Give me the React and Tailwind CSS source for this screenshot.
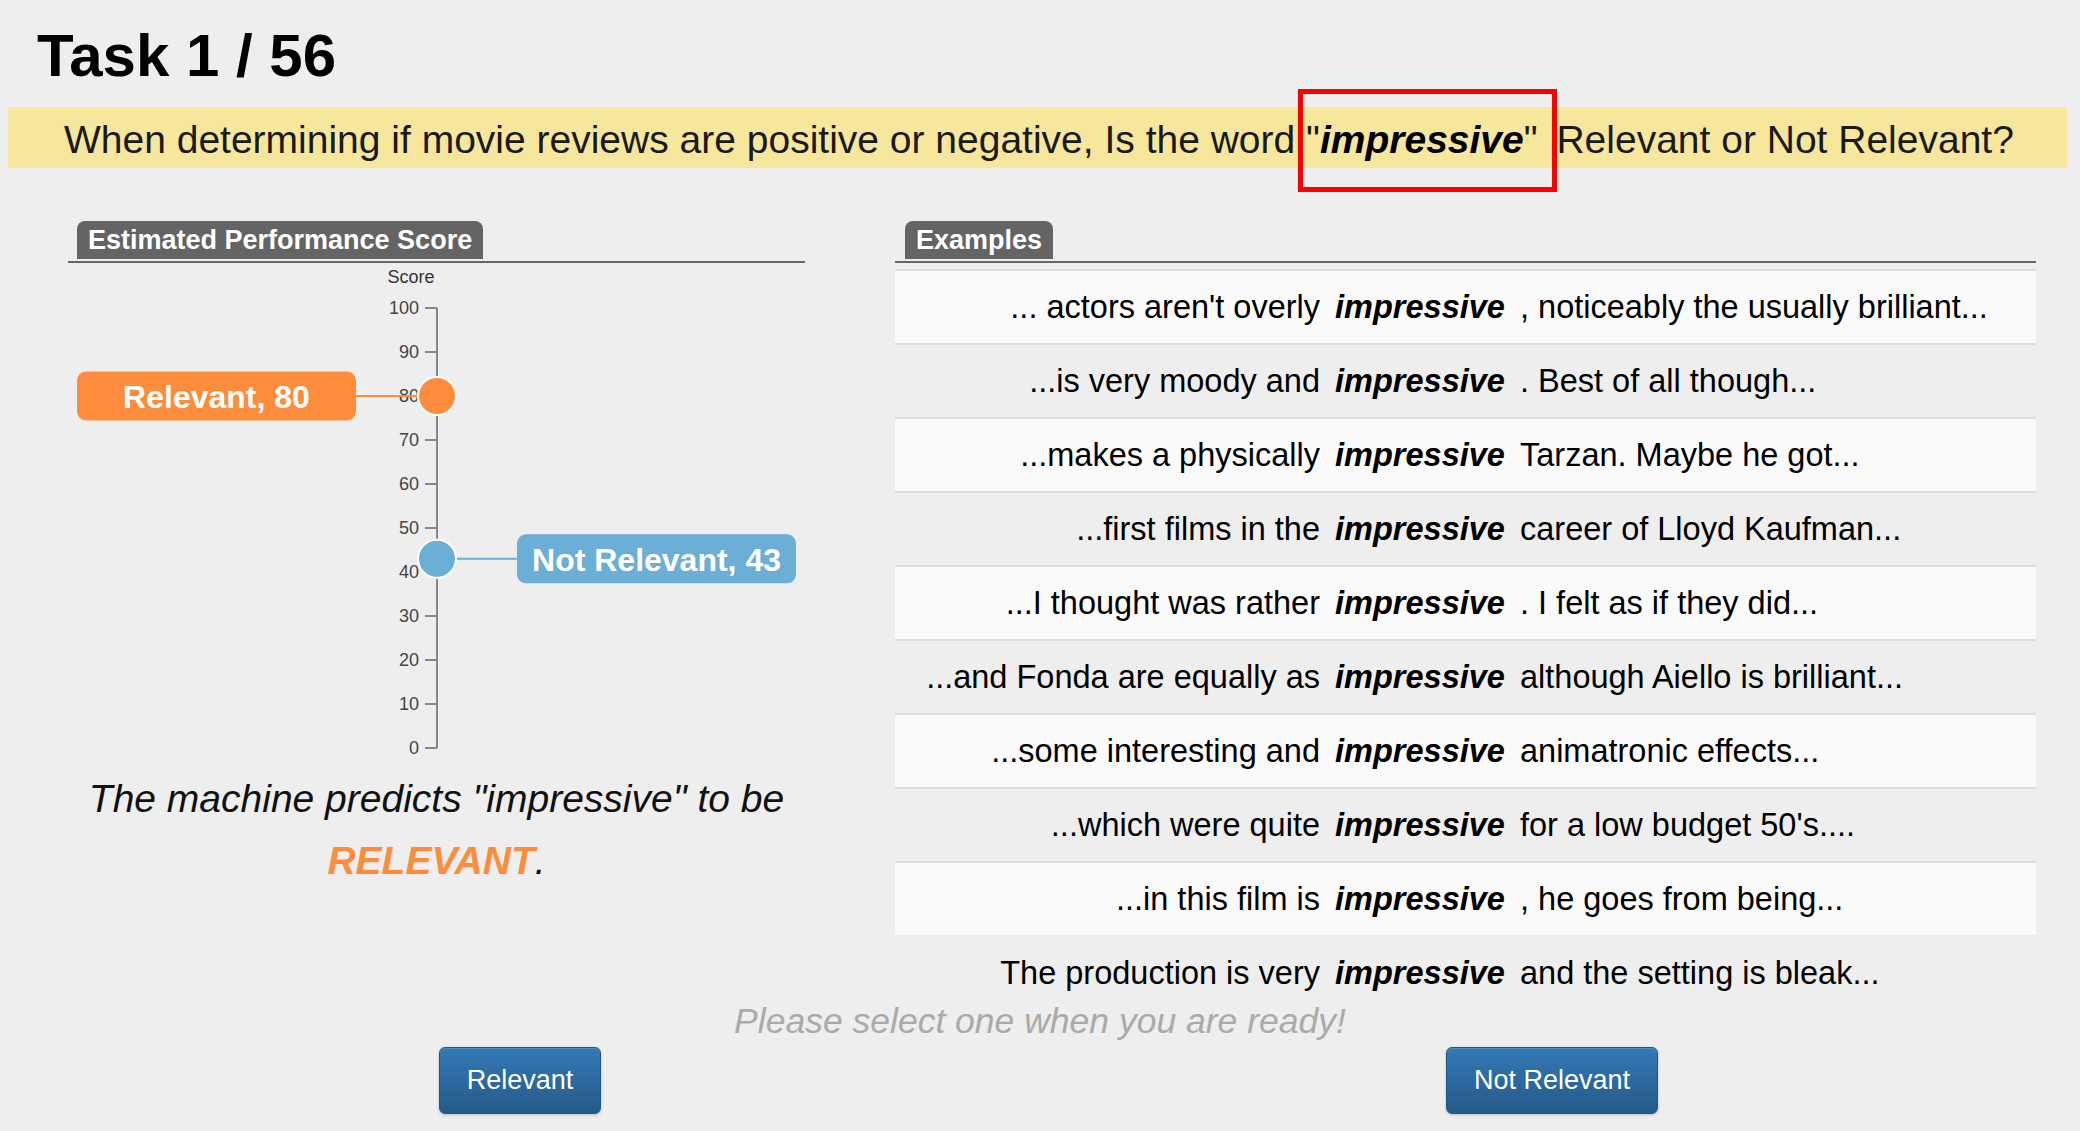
import React from 'react';

const examples = [
  ["... actors aren't overly", ', noticeably the usually brilliant...'],
  ['...is very moody and', '. Best of all though...'],
  ['...makes a physically', 'Tarzan. Maybe he got...'],
  ['...first films in the', 'career of Lloyd Kaufman...'],
  ['...I thought was rather', '. I felt as if they did...'],
  ['...and Fonda are equally as', 'although Aiello is brilliant...'],
  ['...some interesting and', 'animatronic effects...'],
  ['...which were quite', "for a low budget 50's...."],
  ['...in this film is', ', he goes from being...'],
  ['The production is very', 'and the setting is bleak...'],
];

const ticks = [0, 10, 20, 30, 40, 50, 60, 70, 80, 90, 100];
const AXIS_X = 369;
const y = (v) => 485 - v * 4.4;

function SectionHeader({ title, offset }) {
  return (
    <div>
      <div className={`${offset} mb-[2px] inline-block h-[38px] rounded-t-[8px] bg-[#646464] px-[11px] text-[27px] font-bold leading-[38px] text-white`}>
        {title}
      </div>
      <div className="h-[2px] bg-[#666]" />
    </div>
  );
}

function ScoreLabel({ value, text, color, side }) {
  const cy = y(value);
  const boxX = side === 'left' ? 9 : 449;
  const lineX = side === 'left' ? 288 : 449;
  return (
    <g>
      <line x1={lineX} x2={AXIS_X} y1={cy} y2={cy} stroke={color} strokeWidth="2" />
      <rect x={boxX} y={cy - 24.5} width="279" height="49" rx="9" fill={color} />
      <text
        x={boxX + 139.5}
        y={cy + 1}
        textAnchor="middle"
        dominantBaseline="central"
        fontSize="32"
        fontWeight="bold"
        fill="#fff"
      >
        {text}
      </text>
      <circle cx={AXIS_X} cy={cy} r="19" fill={color} stroke="#fff" strokeWidth="2" />
    </g>
  );
}

function ScoreChart() {
  return (
    <svg width="737" height="505" className="block" fontFamily="'Liberation Sans', Arial, sans-serif">
      <text x="343" y="14" textAnchor="middle" dominantBaseline="central" fontSize="18" fill="#333">
        Score
      </text>
      <line x1={AXIS_X} x2={AXIS_X} y1={y(100)} y2={y(0)} stroke="#888" strokeWidth="2" />
      {ticks.map((t) => (
        <g key={t}>
          <line x1={AXIS_X - 12} x2={AXIS_X} y1={y(t)} y2={y(t)} stroke="#888" strokeWidth="2" />
          <text x={AXIS_X - 18} y={y(t)} textAnchor="end" dominantBaseline="central" fontSize="18" fill="#444">
            {t}
          </text>
        </g>
      ))}
      <ScoreLabel value={80} text="Relevant, 80" color="#fd8d3c" side="left" />
      <ScoreLabel value={43} text="Not Relevant, 43" color="#6baed6" side="right" />
    </svg>
  );
}

function ActionButton({ children }) {
  return (
    <button
      type="button"
      className="h-[67px] rounded-[6px] border border-[#245580] bg-linear-to-b from-[#337ab7] to-[#265a88] px-[27px] text-[27px] text-white shadow-[0_1px_3px_rgba(0,0,0,0.2),inset_0_1px_0_rgba(255,255,255,0.15)]"
    >
      {children}
    </button>
  );
}

export default function App() {
  return (
    <div className="min-h-[1131px] w-[2080px] overflow-hidden bg-[#eeeeee] font-['Liberation_Sans',Arial,sans-serif] text-black">
      <h1 className="pl-[37px] pt-[26px] text-[60px] font-bold leading-none">Task 1 / 56</h1>

      <div className="ml-[8px] mt-[21px] h-[61px] w-[2059px] whitespace-nowrap bg-[#f6e79d] pl-[56px] pt-[4px] text-[39px] leading-[57px] text-[#1a1a1a]">
        When determining if movie reviews are positive or negative, Is the word{' '}
        <span className="relative">
          "<b className="font-bold italic text-black">impressive</b>"
          <span className="absolute -bottom-[31px] -left-[8px] -right-[19px] -top-[29px] border-[5px] border-[#ff0000]" />
        </span>{' '}
        <span className="ml-[8px]">Relevant or Not Relevant?</span>
      </div>

      <div className="mt-[53px] flex gap-[90px] pl-[68px]">
        <div className="w-[737px]">
          <SectionHeader title="Estimated Performance Score" offset="ml-[9px]" />
          <ScoreChart />
          <p className="text-center text-[39px] italic leading-[62px] text-[#111]">
            The machine predicts "impressive" to be
            <br />
            <span className="font-bold text-[#fd8d3c]">RELEVANT</span>.
          </p>
        </div>

        <div className="w-[1141px]">
          <SectionHeader title="Examples" offset="ml-[10px]" />
          <div className="mt-[6px]">
            {examples.map(([before, after], i) => (
              <div
                key={i}
                className={`grid h-[74px] grid-cols-[425px_200px_1fr] items-center border-t-2 text-[32.5px] ${
                  i === examples.length - 1 ? 'border-transparent' : 'border-[#dddddd]'
                } ${i % 2 === 0 ? 'bg-[#fafafa]' : ''}`}
              >
                <span className="whitespace-nowrap text-right">{before}</span>
                <span className="text-center font-bold italic">impressive</span>
                <span className="whitespace-nowrap">{after}</span>
              </div>
            ))}
          </div>
        </div>
      </div>

      <p className="text-center text-[35.5px] italic leading-[24px] text-[#aaaaaa]">
        Please select one when you are ready!
      </p>

      <div className="mt-[14px] grid grid-cols-2">
        <div className="flex justify-center">
          <ActionButton>Relevant</ActionButton>
        </div>
        <div className="flex justify-center pr-[16px]">
          <ActionButton>Not Relevant</ActionButton>
        </div>
      </div>
    </div>
  );
}
